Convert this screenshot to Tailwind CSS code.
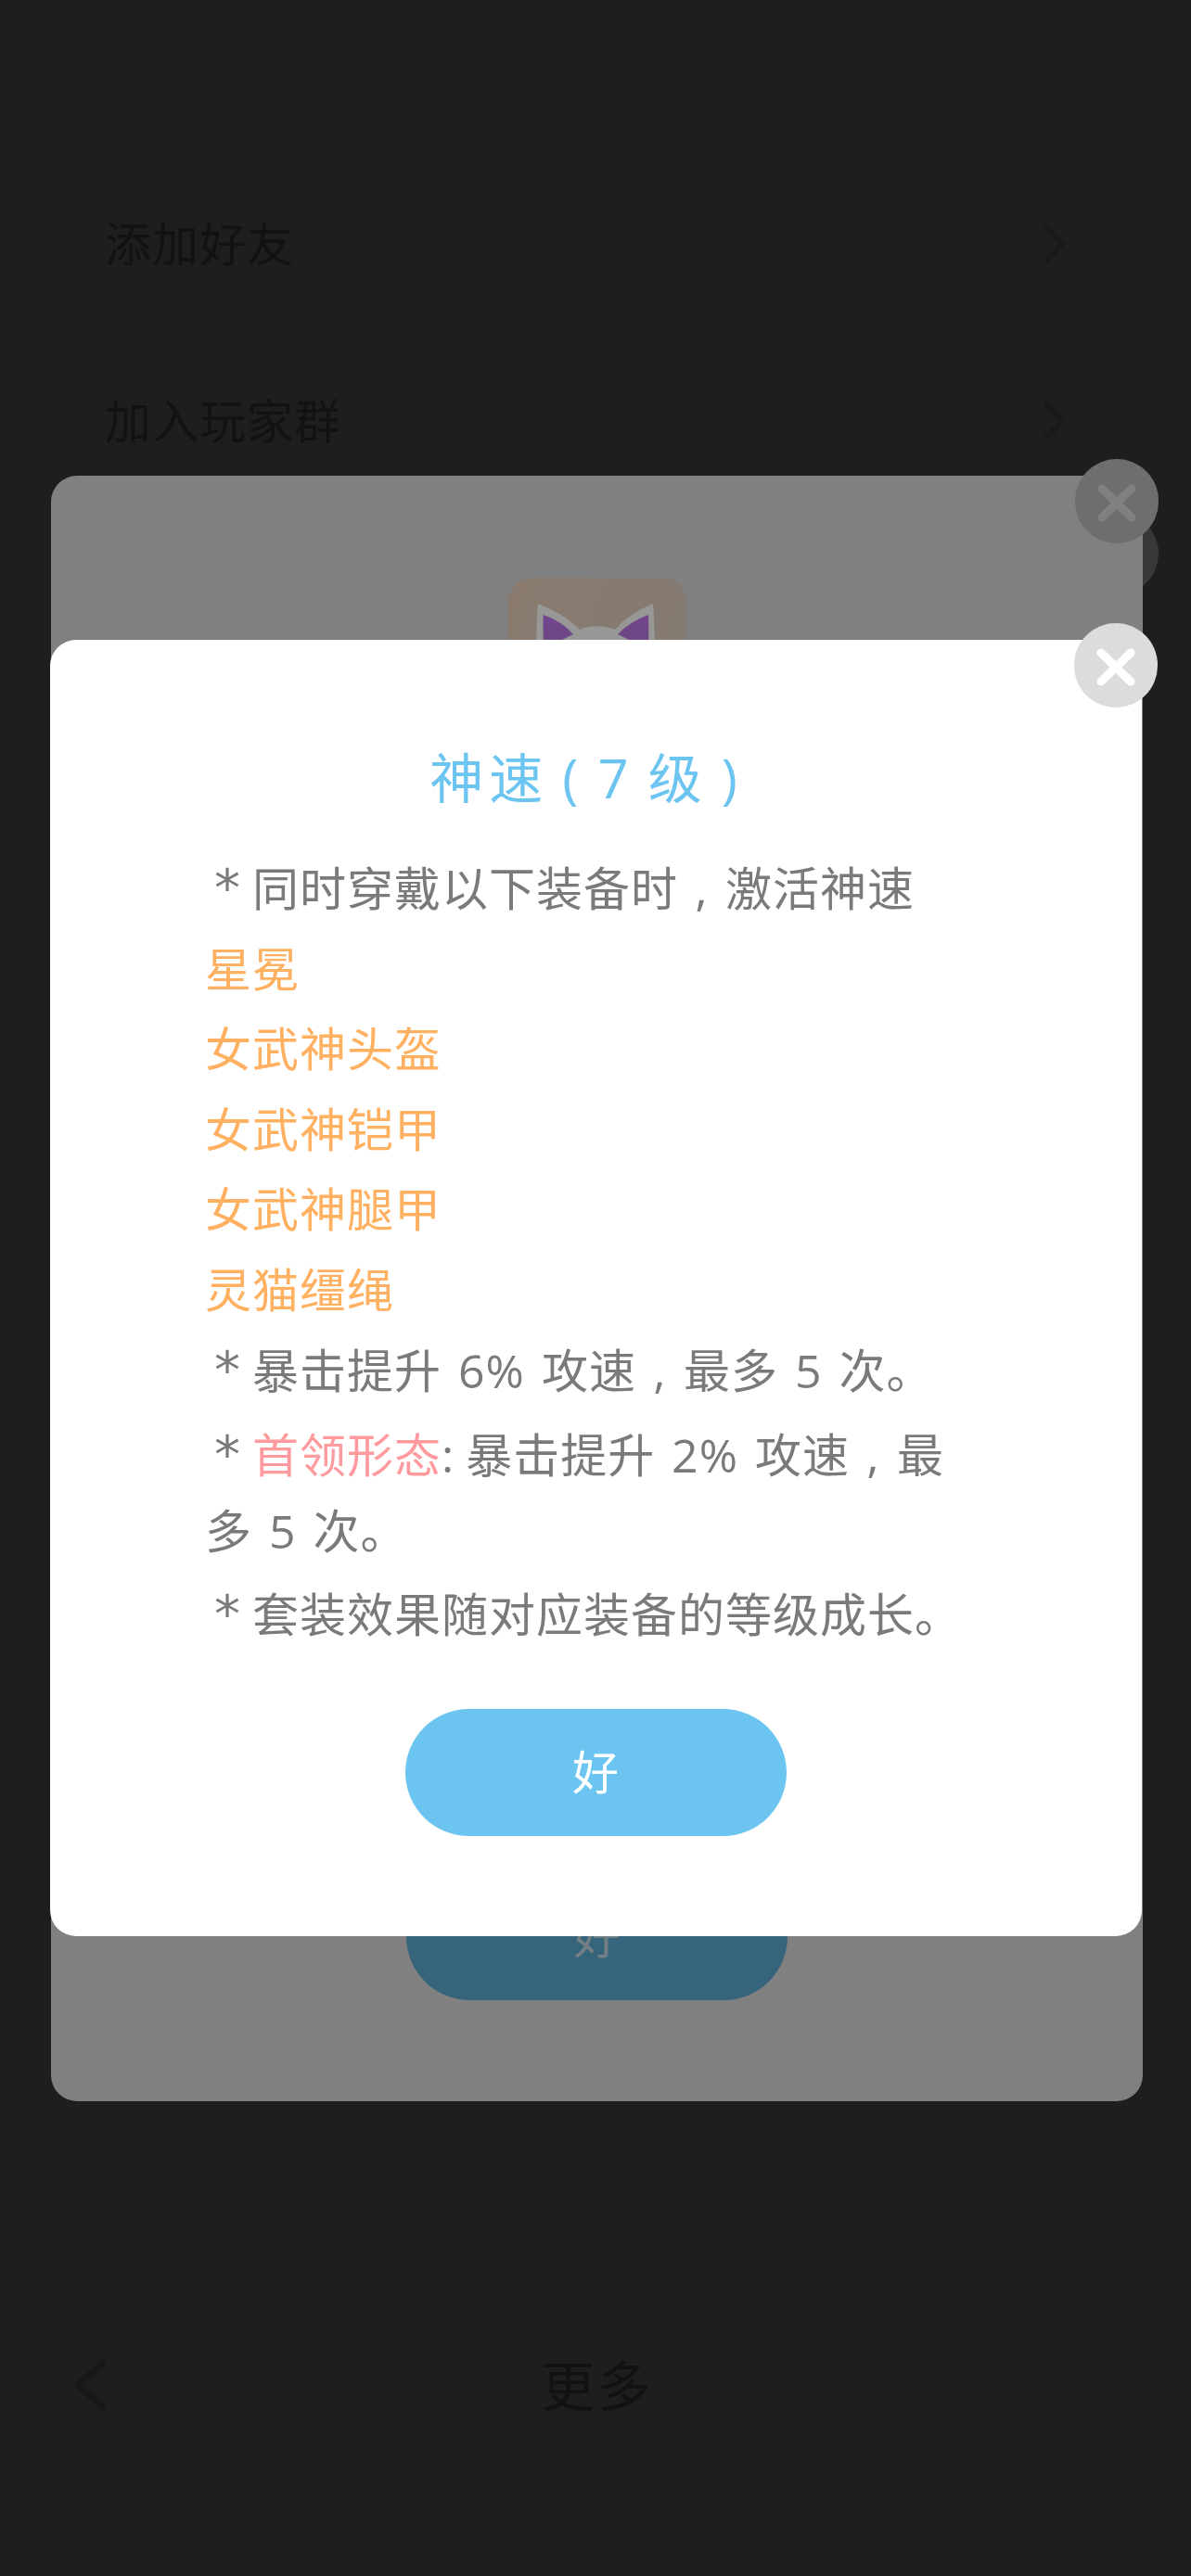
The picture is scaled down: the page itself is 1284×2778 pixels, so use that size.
<!DOCTYPE html>
<html lang="zh">
<head>
  <meta charset="UTF-8" />
  <meta name="viewport" content="width=device-width, initial-scale=1.0"/>
  <title>更多</title>
  <script src="https://cdn.jsdelivr.net/npm/@tailwindcss/browser@4"></script>
</head>
<body class="bg-[#1e1e1e]">
<div class="relative w-[1284px] h-[2778px] overflow-hidden bg-[#1e1e1e] flex flex-col font-['Open_Sans','Noto_Sans_CJK_SC',sans-serif]">

  <!-- Page under the dialogs -->
  <div class="flex-1 pt-[167px] pl-[113px] pr-[135px] text-[#121212] text-[50px] tracking-[1px]">
    <div class="h-[191px] flex items-center justify-between">
      <span class="leading-[190px]">添加好友</span>
      <svg class="w-[24px] h-[40px]" viewBox="0 0 24 40" fill="none" stroke="#191919" stroke-width="6" stroke-linecap="round" stroke-linejoin="round"><path d="M4 3l16 17L4 37"/></svg>
    </div>
    <div class="h-[191px] flex items-center justify-between">
      <span class="leading-[190px]">加入玩家群</span>
      <svg class="w-[24px] h-[40px]" viewBox="0 0 24 40" fill="none" stroke="#191919" stroke-width="6" stroke-linecap="round" stroke-linejoin="round"><path d="M4 3l16 17L4 37"/></svg>
    </div>
  </div>
  <div class="relative h-[132px] mb-[140px] pl-[3px] flex items-center justify-center text-[#121212] text-[58px] tracking-[2px]">
    <svg class="absolute left-[78px] top-[38px] w-[40px] h-[56px]" viewBox="0 0 40 56" fill="none" stroke="#181818" stroke-width="8" stroke-linecap="round" stroke-linejoin="round"><path d="M32 5L7 28l25 23"/></svg>
    <span>更多</span>
  </div>

  <!-- Dialog of a layer further down, nearly hidden -->
  <div class="absolute left-[1159px] top-[552px] w-[90px] h-[90px] rounded-full bg-[#383838]"></div>

  <!-- Dimmed dialog -->
  <div class="absolute left-[55px] top-[513px] w-[1177px] h-[1753px] rounded-[28px] bg-[#808080] flex flex-col items-center">
    <svg class="mt-[110px] w-[192px] h-[192px]" viewBox="0 0 192 192">
      <defs>
        <linearGradient id="tile" x1="0" y1="0" x2="1" y2="0.4">
          <stop offset="0" stop-color="#8a7a6e"/>
          <stop offset="1" stop-color="#837a72"/>
        </linearGradient>
        <linearGradient id="ear" x1="0" y1="0" x2="0" y2="1">
          <stop offset="0" stop-color="#74458f"/>
          <stop offset="1" stop-color="#64497a"/>
        </linearGradient>
      </defs>
      <rect width="192" height="192" rx="26" fill="url(#tile)"/>
      <path d="M31.7 28Q62 40 76.7 55.7Q94 49 115 55.7Q130 39 156 28Q159 70 158 120H31Q29 70 31.7 28z" fill="#979795"/>
      <path d="M37.7 40Q58 47 70 61L58 67V90H39Q37 60 37.7 40z" fill="url(#ear)"/>
      <path d="M151 40Q130 48 118 61L130 67V90H150Q152 60 151 40z" fill="url(#ear)"/>
    </svg>
    <div class="mt-auto mb-[109px] w-[411px] h-[137px] rounded-full bg-[#36647a] flex items-center justify-center text-[#737f85] text-[50px]">好</div>
  </div>
  <div class="absolute left-[1159px] top-[495px] w-[90px] h-[91px] rounded-full bg-[#6e6e6e] flex items-center justify-center">
    <svg class="w-[90px] h-[90px]" viewBox="0 0 90 90" fill="none" stroke="#808080" stroke-width="9" stroke-linecap="round"><path d="M29 31l32 31M61 31L29 62"/></svg>
  </div>

  <!-- Top dialog -->
  <div class="absolute left-[54px] top-[690px] w-[1177px] h-[1398px] rounded-[28px] bg-white pt-[108px] pl-[167px] pr-[168px] text-[#7a7a7a] text-[50px] leading-[82px] tracking-[1px] [word-spacing:4px]">
    <h2 class="text-center pr-[20px] text-[#6cc5f1] text-[58px] tracking-[6px] [word-spacing:-6px] font-normal">神速 ( 7 级 )</h2>
    <p class="mt-[37px] mb-[4.6px]"><span class="inline-block w-[51px] pl-[10px] text-[56px] leading-none font-['DejaVu_Sans']">*</span>同时穿戴以下装备时<span class="inline-block w-[51px] text-center leading-none">,</span>激活神速</p>
    <p class="mb-[4.6px] text-[#ffb061]">星冕</p>
    <p class="mb-[4.6px] text-[#ffb061]">女武神头盔</p>
    <p class="mb-[4.6px] text-[#ffb061]">女武神铠甲</p>
    <p class="mb-[4.6px] text-[#ffb061]">女武神腿甲</p>
    <p class="mb-[4.6px] text-[#ffb061]">灵猫缰绳</p>
    <p class="mb-[9px]"><span class="inline-block w-[51px] pl-[10px] text-[56px] leading-none font-['DejaVu_Sans']">*</span>暴击提升 6% 攻速<span class="inline-block w-[51px] text-center leading-none">,</span>最多 5 次。</p>
    <p class="mb-[8.4px]"><span class="inline-block w-[51px] pl-[10px] text-[56px] leading-none font-['DejaVu_Sans']">*</span><span class="text-[#ff9a9e]">首领形态</span><span class="mr-[-6px]">:</span> 暴击提升 2% 攻速<span class="inline-block w-[51px] text-center leading-none">,</span>最多 5 次。</p>
    <p><span class="inline-block w-[51px] pl-[10px] text-[56px] leading-none font-['DejaVu_Sans']">*</span>套装效果随对应装备的等级成长。</p>
    <button class="block mx-auto mt-[61px] w-[411px] h-[137px] rounded-full bg-[#6cc5f1] text-white text-[50px] tracking-normal">好</button>
  </div>
  <div class="absolute left-[1158px] top-[672px] w-[90px] h-[91px] rounded-full bg-[#dcdcdc] flex items-center justify-center">
    <svg class="w-[90px] h-[90px]" viewBox="0 0 90 90" fill="none" stroke="#ffffff" stroke-width="9" stroke-linecap="round"><path d="M29 31l32 31M61 31L29 62"/></svg>
  </div>

</div>
</body>
</html>
